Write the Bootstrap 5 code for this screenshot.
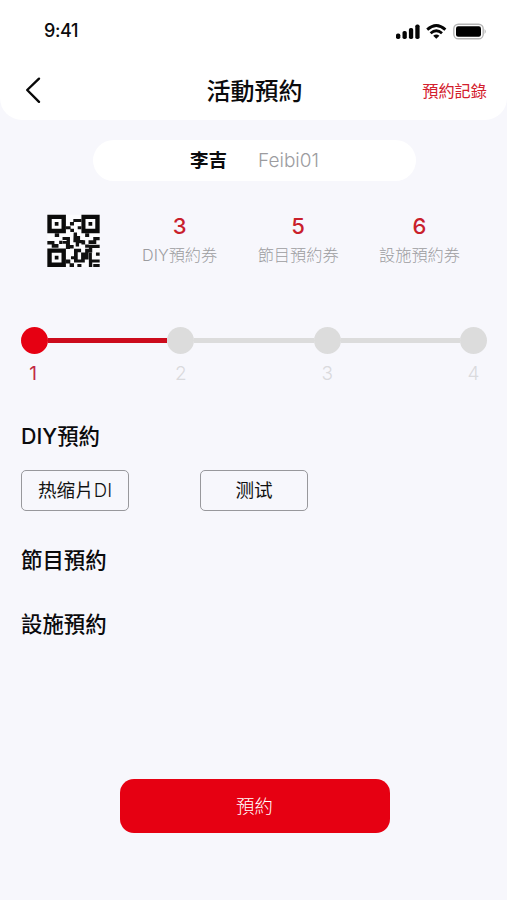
<!DOCTYPE html>
<html lang="zh-Hant">
<head>
<meta charset="utf-8">
<meta name="viewport" content="width=device-width, initial-scale=1">
<title>活動預約</title>
<link href="https://cdn.jsdelivr.net/npm/bootstrap@5.3.0/dist/css/bootstrap.min.css" rel="stylesheet">
<style>
:root{--brand:#e60012}
body{font-family:Inter,"Noto Sans CJK TC",sans-serif;background:#f7f7fc;color:#0b0b0d;line-height:1}
.screen{height:900px;overflow:hidden}
.top-panel{height:120px;border-radius:0 0 22px 22px}
.status-bar{height:62px;padding:0 20px 0 44px}
.clock{font-size:18px;font-weight:500;letter-spacing:-.4px}
.title-bar{height:58px;padding:0 20px 0 24px}
.side{width:92px}
.page-title{font-size:24px;font-weight:500;padding:3px 2px 0 0}
.record-link{font-size:16.2px;color:#d3202d}
.user-pill{width:323px;height:41px;margin:20px 0 0 2px;gap:31px;font-size:19px}
.user-name{font-weight:700;font-size:18.5px}
.soft{color:#9c9c9f;font-weight:300}
.tickets{margin:33px 47px 0 47px;height:56px}
.ticket-list{padding:1px 0 0 42px}
.ticket{font-size:16.2px;gap:10px}
.ticket strong{font-size:22px;font-weight:500;color:#c9202b}
.steps{margin:57px 20px 0 21px}
.dot{width:27px;height:27px;background:#dcdcdc}
.rail{height:5px;background:#dcdcdc}
.on{background:var(--brand)}
.rail.on{background:#cc0b1c}
.step-labels{margin:10px 20px 0 21px}
.step-no{width:27px;font-size:19px;font-weight:300;color:#dadadd}
.step-no.current{color:#c22a44;font-weight:400;padding-right:3px}
.section-title{font-size:21.4px;font-weight:500;margin:0}
.choices{padding:41px 21px 0}
.options{gap:71px;margin:20px 0 37px}
.option{width:108px;height:41px;font-size:18.6px;font-family:Inter,"Noto Sans CJK SC",sans-serif;font-weight:400;border:1px solid #98989c;border-radius:5px;color:#111;padding:0;line-height:1;white-space:nowrap}
.option span{font-weight:300}
.next-title{margin-top:39px}
.submit{width:270px;height:54px;margin:0 0 67px 2px;border:0;border-radius:14px;background:var(--brand);color:#fff;font-size:18.4px;font-weight:300;line-height:1}
</style>
<script src="https://cdn.jsdelivr.net/npm/bootstrap@5.3.0/dist/js/bootstrap.bundle.min.js"></script>
</head>
<body>
<main class="screen d-flex flex-column">
  <header class="top-panel bg-white">
    <div class="status-bar d-flex align-items-center justify-content-between">
      <span class="clock">9:41</span>
      <svg width="92" height="18" viewBox="0 0 92 18"><g fill="#050505"><rect x="1" y="11.5" width="4.3" height="5.5" rx="1.8"/><rect x="7.5" y="9" width="4.3" height="8" rx="1.8"/><rect x="13.9" y="6" width="4.3" height="11" rx="1.8"/><rect x="20.3" y="2.5" width="4.3" height="14.5" rx="1.8"/></g><path d="M32.2 7.6Q41.3-.6 50.4 7.6M35.6 11.2Q41.3 6.2 47 11.2" fill="none" stroke="#050505" stroke-width="2.8"/><path d="M38.2 13.7Q41.3 11.2 44.4 13.7L41.3 16.8Z" fill="#050505"/><rect x="58.8" y="2.2" width="29.4" height="14.6" rx="4.6" fill="none" stroke="#b5b5b5" stroke-width="1.4"/><rect x="61" y="4.3" width="25" height="10.4" rx="2.2"/><path d="M89.6 7Q91.8 9.5 89.6 12Z" fill="#aaa"/></svg>
    </div>
    <nav class="title-bar d-flex align-items-center justify-content-between">
      <a class="side" href="#" aria-label="返回"><svg class="d-block" width="18" height="28" viewBox="0 0 18 28"><path d="M15 1.7 3.2 13 15 24.8" fill="none" stroke="#080808" stroke-width="2.4" stroke-linecap="round" stroke-linejoin="round"/></svg></a>
      <h1 class="page-title m-0">活動預約</h1>
      <a class="side record-link text-decoration-none text-end" href="#">預約記錄</a>
    </nav>
  </header>
  <section class="user-pill bg-white rounded-pill d-flex align-items-center justify-content-center align-self-center">
    <span class="user-name">李吉</span><span class="soft">Feibi01</span>
  </section>
  <section class="tickets d-flex">
    <svg class="flex-shrink-0" width="53" height="53" viewBox="-1 -2 157 157" aria-label="QR">
      <rect width="155" height="155" fill="#fff" opacity=".6"/>
      <path fill="#0b0b0b" fill-rule="evenodd" d="M0 0h55v55H0zM13 13v29h29V13zM22 22h11v11H22zM101 0h54v55h-54zM113 13v29h29V13zM122 22h11v11h-11zM0 100h55v55H0zM13 113v29h29v-29zM22 122h11v11H22z"/>
      <path fill="#111" d="M77 13h24v9H77zM67 22h12v10H67zM55 34h14v9H55zM68 42h11v9H68zM90 34h11v9H90zM78 53h10v10h9v12h10v10H94v9H84V82h-7zM22 55h13v11H22zM112 55h12v11h-12zM45 66h22v9H45zM35 77h10v10H35zM57 75h10v27H55V86h-9v-8h11zM0 78h21v9h12v11H13V88H0zM67 90h11v10H67zM136 66h19v10h-10v11h-23V76h14zM101 76h11v12h-11zM112 88h11v10h-11zM123 89h32v10h-22v13h-11v10h-22v-10h12v-11h11zM79 101h21v10H90v31H79v-10h-9v-9h9zM55 133h13v11h11v11H66v-10H55zM90 133h10v-11h22v11h-11v9h-21zM123 113h9v20h23v9h-22v13h-10zM144 112h11v10h-11zM136 146h19v9h-19zM89 146h12v9H89z"/>
    </svg>
    <div class="ticket-list d-flex flex-grow-1 justify-content-between">
      <div class="ticket d-flex flex-column align-items-center"><strong>3</strong><span class="soft">DIY預約券</span></div>
      <div class="ticket d-flex flex-column align-items-center"><strong>5</strong><span class="soft">節目預約券</span></div>
      <div class="ticket d-flex flex-column align-items-center"><strong>6</strong><span class="soft">設施預約券</span></div>
    </div>
  </section>
  <section class="steps d-flex align-items-center">
    <span class="dot on rounded-circle"></span><span class="rail on flex-fill"></span>
    <span class="dot rounded-circle"></span><span class="rail flex-fill"></span>
    <span class="dot rounded-circle"></span><span class="rail flex-fill"></span>
    <span class="dot rounded-circle"></span>
  </section>
  <div class="step-labels d-flex justify-content-between text-center">
    <span class="step-no current">1</span><span class="step-no">2</span><span class="step-no">3</span><span class="step-no">4</span>
  </div>
  <section class="choices">
    <h2 class="section-title">DIY預約</h2>
    <div class="options d-flex">
      <button class="option btn" type="button">热缩片<span>DI</span></button>
      <button class="option btn" type="button">测试</button>
    </div>
    <h2 class="section-title">節目預約</h2>
    <h2 class="section-title next-title">設施預約</h2>
  </section>
  <button class="submit btn align-self-center mt-auto" type="button">預約</button>
</main>
</body>
</html>
